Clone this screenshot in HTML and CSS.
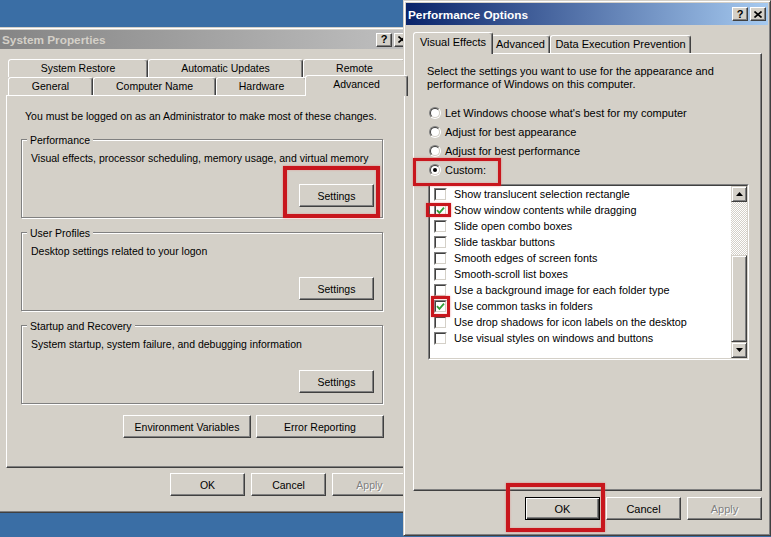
FILE: index.html
```html
<!DOCTYPE html>
<html lang="en">
<head>
<meta charset="utf-8">
<title>System Properties / Performance Options</title>
<link rel="stylesheet" href="styles.css">
</head>
<body>
<section class="win win-sys">
  <header class="title inactive">
    <span class="title-text">System Properties</span>
    <span class="cap-btns">
      <span class="cap-btn">?</span>
      <span class="cap-btn"><svg width="8" height="7" viewBox="0 0 8 7"><path d="M0.5 0.5 L7.5 6.5 M7.5 0.5 L0.5 6.5" stroke="#000" stroke-width="1.6" fill="none"/></svg></span>
    </span>
  </header>
  <div class="client sys-client">
    <div class="tabs">
      <div class="tabrow">
        <div class="tab t-sr">System Restore</div>
        <div class="tab t-au">Automatic Updates</div>
        <div class="tab t-rm">Remote</div>
      </div>
      <div class="tabrow">
        <div class="tab t-gen">General</div>
        <div class="tab t-cn">Computer Name</div>
        <div class="tab t-hw">Hardware</div>
        <div class="tab sel t-adv">Advanced</div>
      </div>
    </div>
    <div class="panel sys-panel">
      <p class="note">You must be logged on as an Administrator to make most of these changes.</p>
      <fieldset class="group">
        <legend>Performance</legend>
        <p class="desc">Visual effects, processor scheduling, memory usage, and virtual memory</p>
        <div class="grp-actions"><button class="btn">Settings</button></div>
      </fieldset>
      <fieldset class="group">
        <legend>User Profiles</legend>
        <p class="desc">Desktop settings related to your logon</p>
        <div class="grp-actions"><button class="btn">Settings</button></div>
      </fieldset>
      <fieldset class="group">
        <legend>Startup and Recovery</legend>
        <p class="desc">System startup, system failure, and debugging information</p>
        <div class="grp-actions"><button class="btn">Settings</button></div>
      </fieldset>
      <div class="row-actions">
        <button class="btn wide">Environment Variables</button>
        <button class="btn wide">Error Reporting</button>
      </div>
    </div>
    <div class="dlg-actions sys-actions">
      <button class="btn">OK</button>
      <button class="btn">Cancel</button>
      <button class="btn" disabled>Apply</button>
    </div>
  </div>
</section>

<section class="win win-perf">
  <header class="title active">
    <span class="title-text">Performance Options</span>
    <span class="cap-btns">
      <span class="cap-btn">?</span>
      <span class="cap-btn"><svg width="8" height="7" viewBox="0 0 8 7"><path d="M0.5 0.5 L7.5 6.5 M7.5 0.5 L0.5 6.5" stroke="#000" stroke-width="1.6" fill="none"/></svg></span>
    </span>
  </header>
  <div class="client perf-client">
    <div class="tabs">
      <div class="tabrow perf-row">
        <div class="tab sel t-ve">Visual Effects</div>
        <div class="tab t-pa">Advanced</div>
        <div class="tab t-dep">Data Execution Prevention</div>
      </div>
    </div>
    <div class="panel perf-panel">
      <p class="intro">Select the settings you want to use for the appearance and<br>performance of Windows on this computer.</p>
      <div class="radios">
        <div class="radio-row"><span class="radio"><span class="radio-in"></span></span>Let Windows choose what's best for my computer</div>
        <div class="radio-row"><span class="radio"><span class="radio-in"></span></span>Adjust for best appearance</div>
        <div class="radio-row"><span class="radio"><span class="radio-in"></span></span>Adjust for best performance</div>
        <div class="radio-row"><span class="radio"><span class="radio-in on"></span></span>Custom:</div>
      </div>
      <div class="listbox">
        <div class="list-inner">
          <ul class="items">
            <li><span class="chk"><span class="chk-in"></span></span>Show translucent selection rectangle</li>
            <li><span class="chk"><span class="chk-in"><svg width="9" height="9" viewBox="0 0 9 9"><polyline points="1,4.2 3.4,6.8 8,1.6" fill="none" stroke="#2f9e35" stroke-width="1.8"/></svg></span></span>Show window contents while dragging</li>
            <li><span class="chk"><span class="chk-in"></span></span>Slide open combo boxes</li>
            <li><span class="chk"><span class="chk-in"></span></span>Slide taskbar buttons</li>
            <li><span class="chk"><span class="chk-in"></span></span>Smooth edges of screen fonts</li>
            <li><span class="chk"><span class="chk-in"></span></span>Smooth-scroll list boxes</li>
            <li><span class="chk"><span class="chk-in"></span></span>Use a background image for each folder type</li>
            <li><span class="chk"><span class="chk-in"><svg width="9" height="9" viewBox="0 0 9 9"><polyline points="1,4.2 3.4,6.8 8,1.6" fill="none" stroke="#2f9e35" stroke-width="1.8"/></svg></span></span>Use common tasks in folders</li>
            <li><span class="chk"><span class="chk-in"></span></span>Use drop shadows for icon labels on the desktop</li>
            <li><span class="chk"><span class="chk-in"></span></span>Use visual styles on windows and buttons</li>
          </ul>
          <div class="scrollbar">
            <span class="sb-btn"><svg width="7" height="4" viewBox="0 0 7 4"><polygon points="3.5,0 7,4 0,4" fill="#000"/></svg></span>
            <span class="sb-track"></span>
            <span class="sb-thumb"></span>
            <span class="sb-btn"><svg width="7" height="4" viewBox="0 0 7 4"><polygon points="0,0 7,0 3.5,4" fill="#000"/></svg></span>
          </div>
        </div>
      </div>
    </div>
    <div class="dlg-actions perf-actions">
      <button class="btn default">OK</button>
      <button class="btn">Cancel</button>
      <button class="btn" disabled>Apply</button>
    </div>
  </div>
</section>

<div class="mark mark-settings"></div>
<div class="mark mark-custom"></div>
<div class="mark mark-chk2"></div>
<div class="mark mark-chk8"></div>
<div class="mark mark-ok"></div>
</body>
</html>
```

FILE: styles.css
```css
* { box-sizing: border-box; }
html, body { margin: 0; padding: 0; }
body {
  width: 771px;
  height: 537px;
  overflow: hidden;
  position: relative;
  background: #3a6ea5;
  font-family: "Liberation Sans", Arial, sans-serif;
  color: #000;
}

/* windows */
.win {
  position: absolute;
  display: flex;
  flex-direction: column;
  background: #d4d0c8;
  border: 1px solid;
  border-color: #d4d0c8 #404040 #404040 #d4d0c8;
  box-shadow: inset 1px 1px 0 #fff, inset -1px -1px 0 #808080;
  padding: 2px;
}
.win-sys { left: -3px; top: 27px; width: 418px; height: 486px; font-size: 10.5px; }
.win-perf { left: 403px; top: 0; width: 368px; height: 536px; font-size: 11px; }

/* title bars */
.title {
  display: flex;
  align-items: center;
  justify-content: space-between;
  padding: 0 2px;
  font-weight: bold;
  flex: none;
}
.title.inactive { height: 19px; background: linear-gradient(to right, #858585, #c0c0c0); color: #d4d0c8; }
.title.active { height: 22px; background: linear-gradient(to right, #0a246a, #a6caf0); color: #fff; }
.title-text { font-size: 11.8px; line-height: 14px; }
.title.active .title-text { padding-top: 1px; }
.cap-btns { display: flex; gap: 2px; }
.cap-btn {
  width: 16px;
  height: 14px;
  display: flex;
  align-items: center;
  justify-content: center;
  background: #d4d0c8;
  border: 1px solid;
  border-color: #fff #404040 #404040 #fff;
  box-shadow: inset -1px -1px 0 #808080;
  color: #000;
  font-size: 11px;
  line-height: 1;
  font-weight: bold;
}

/* client areas */
.client { flex: 1; display: flex; flex-direction: column; }
.sys-client { padding: 10px 0 0 6px; }
.perf-client { padding: 10px 0 0 7px; }

/* tabs */
.tabs { padding-left: 2px; }
.tabrow { display: flex; height: 18px; align-items: flex-end; }
.tab {
  flex: none;
  height: 18px;
  background: #d4d0c8;
  border: 1px solid;
  border-bottom: 0;
  border-color: #fff #404040 transparent #fff;
  box-shadow: inset -1px 0 0 #808080;
  border-radius: 3px 3px 0 0;
  text-align: center;
  line-height: 17px;
  white-space: nowrap;
}
.tab.sel {
  height: 21px;
  margin: 0 -2px -1px;
  padding-bottom: 3px;
  position: relative;
  z-index: 1;
}
.t-sr { width: 140px; }
.t-au { width: 155px; }
.t-rm { width: 103px; }
.t-gen { width: 85px; }
.t-cn { width: 123px; }
.t-hw { width: 91px; }
.t-adv { width: 103px; }
.perf-row .tab.sel { height: 22px; padding-top: 1px; padding-bottom: 3px; }
.t-ve { width: 80px; }
.t-pa { width: 59px; }
.t-dep { width: 141px; }

/* panels */
.panel {
  border: 1px solid;
  border-color: #fff #404040 #404040 #fff;
  box-shadow: inset -1px -1px 0 #808080;
}
.sys-panel { width: 400px; padding: 14px 22px 29px 14px; }
.note { margin: 0 0 9px 4px; line-height: 13px; }

/* group boxes */
.group {
  margin: 0 0 7px;
  padding: 5px 8px 10px 9px;
  min-width: 0;
  border: 1px solid #808080;
  box-shadow: inset 1px 1px 0 #fff, 1px 1px 0 #fff;
}
.group legend {
  padding: 2px 3px 0;
  margin-left: -4px;
  line-height: 13px;
  background: #d4d0c8;
}
.desc { margin: 0; line-height: 13px; white-space: nowrap; }
.grp-actions { display: flex; justify-content: flex-end; margin-top: 19px; }

.row-actions { display: flex; justify-content: flex-end; gap: 5px; margin: 11px -1px 0 0; }

/* buttons */
.btn {
  width: 75px;
  height: 23px;
  padding: 0;
  font: inherit;
  color: #000;
  background: #d4d0c8;
  border: 1px solid;
  border-color: #fff #404040 #404040 #fff;
  box-shadow: inset -1px -1px 0 #808080;
  border-radius: 0;
}
.btn.wide { width: 128px; }
.btn.default {
  border-color: #000;
  box-shadow: inset 1px 1px 0 #fff, inset -1px -1px 0 #404040, inset -2px -2px 0 #808080;
}
.btn:disabled { color: #808080; text-shadow: 1px 1px 0 #fff; }

.dlg-actions { display: flex; justify-content: flex-end; gap: 6px; }
.sys-actions { margin-top: 5px; padding-right: 5px; }
.perf-actions { margin-top: 6px; padding-right: 6px; }

/* performance panel */
.perf-panel { width: 349px; height: 438px; padding: 11px 13px; }
.intro { margin: 0; line-height: 13px; }
.radios { margin-top: 12px; }
.radio-row { display: flex; align-items: center; height: 19px; white-space: nowrap; }
.radio {
  width: 12px;
  height: 12px;
  margin: 0 4px 0 2px;
  border-radius: 50%;
  border: 1px solid;
  border-color: #808080 #fff #fff #808080;
  flex: none;
}
.radio-in {
  display: flex;
  align-items: center;
  justify-content: center;
  width: 10px;
  height: 10px;
  border-radius: 50%;
  border: 1px solid;
  border-color: #404040 #d4d0c8 #d4d0c8 #404040;
  background: #fff;
}
.radio-in.on::after {
  content: "";
  width: 4px;
  height: 4px;
  border-radius: 50%;
  background: #000;
}

/* list box */
.listbox {
  margin: 5px 0 0 1px;
  width: 321px;
  height: 176px;
  border: 1px solid;
  border-color: #808080 #fff #fff #808080;
}
.list-inner {
  height: 100%;
  display: flex;
  background: #fff;
  border: 1px solid;
  border-color: #404040 #d4d0c8 #d4d0c8 #404040;
}
.items { list-style: none; margin: 0; padding: 0; flex: 1; font-size: 10.8px; }
.items li {
  display: flex;
  align-items: center;
  height: 16px;
  padding-left: 4px;
  white-space: nowrap;
}
.chk {
  width: 13px;
  height: 13px;
  margin-right: 7px;
  flex: none;
  border: 1px solid;
  border-color: #808080 #fff #fff #808080;
}
.chk-in {
  display: flex;
  width: 11px;
  height: 11px;
  background: #fff;
  border: 1px solid;
  border-color: #404040 #d4d0c8 #d4d0c8 #404040;
}

/* scrollbar */
.scrollbar { width: 16px; display: flex; flex-direction: column; flex: none; }
.sb-btn, .sb-thumb {
  background: #d4d0c8;
  border: 1px solid;
  border-color: #d4d0c8 #404040 #404040 #d4d0c8;
  box-shadow: inset 1px 1px 0 #fff, inset -1px -1px 0 #808080;
}
.sb-btn { height: 16px; display: flex; align-items: center; justify-content: center; }
.sb-track {
  height: 53px;
  background-image: repeating-conic-gradient(#fff 0 25%, #d4d0c8 0 50%);
  background-size: 2px 2px;
}
.sb-thumb { height: 87px; }

/* red annotation frames */
.mark {
  position: absolute;
  border: 3px solid #c8161d;
  box-shadow: 0 0 2px rgba(230, 80, 80, 0.6), inset 0 0 2px rgba(240, 110, 110, 0.6);
  z-index: 5;
}
.mark-settings { left: 283px; top: 166px; width: 97px; height: 52px; border-width: 4px; }
.mark-custom { left: 413px; top: 158px; width: 88px; height: 28px; }
.mark-chk2 { left: 426px; top: 203px; width: 25px; height: 14px; }
.mark-chk8 { left: 431px; top: 296px; width: 19px; height: 21px; }
.mark-ok { left: 506px; top: 483px; width: 99px; height: 49px; border-width: 4px; }
```
